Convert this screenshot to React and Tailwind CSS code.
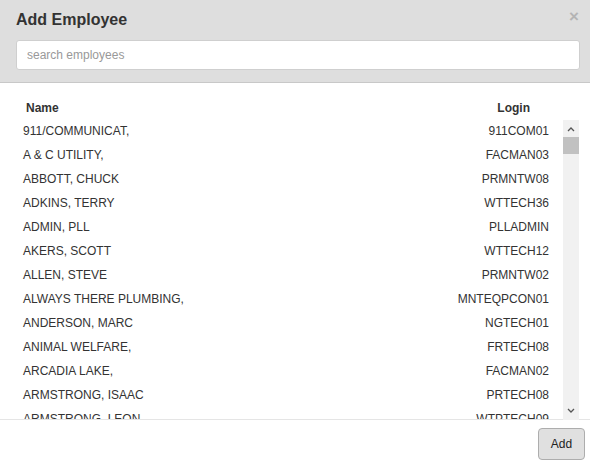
import { useState } from "react"

const employees = [
    ["911/COMMUNICAT,", "911COM01"],
    ["A & C UTILITY,", "FACMAN03"],
    ["ABBOTT, CHUCK", "PRMNTW08"],
    ["ADKINS, TERRY", "WTTECH36"],
    ["ADMIN, PLL", "PLLADMIN"],
    ["AKERS, SCOTT", "WTTECH12"],
    ["ALLEN, STEVE", "PRMNTW02"],
    ["ALWAYS THERE PLUMBING,", "MNTEQPCON01"],
    ["ANDERSON, MARC", "NGTECH01"],
    ["ANIMAL WELFARE,", "FRTECH08"],
    ["ARCADIA LAKE,", "FACMAN02"],
    ["ARMSTRONG, ISAAC", "PRTECH08"],
    ["ARMSTRONG, LEON", "WTPTECH09"],
    ["ARNOLD, GARY", "WTTECH02"],
    ["ASHLEY, DAVID", "PRMNTW05"],
]

export default function App() {
    const [search, setSearch] = useState("")
    const rows = employees.filter(e => e[0].toLowerCase().includes(search.toLowerCase()))

    return (
        <div className="w-[590px] h-[465px] bg-white text-[#333] overflow-hidden" style={{ fontFamily: '"Liberation Sans", Arial, sans-serif' }}>
            {/* HEADER */}
            <div className="relative h-[83px] bg-[#dedede] border-b border-[#c8c8c8] px-4 pt-[10px]">
                <h1 className="text-[16px] leading-5 font-bold text-[#333]">Add Employee</h1>
                <span className="absolute right-[11px] top-[7px] text-[17px] leading-5 font-bold text-[#b4b4b4]">×</span>
                <input
                    value={search}
                    onChange={e => setSearch(e.target.value)}
                    placeholder="search employees"
                    className="mt-[10px] w-[564px] h-[30px] bg-white border border-[#cfcfcf] rounded-[3px] px-[10px] text-[12px] outline-none placeholder:text-[#999]"
                />
            </div>

            {/* TABLE HEAD */}
            <div className="flex items-center h-[37px] pl-[26px] pr-[60px] pt-[12px] text-[12px] font-bold">
                <span className="flex-1">Name</span>
                <span>Login</span>
            </div>

            {/* LIST */}
            <div className="flex h-[300px] border-b border-[#e5e5e5] pr-[11px]">
                <div className="flex-1 overflow-hidden">
                    {rows.map(r => (
                        <div key={r[1]} className="flex h-6 leading-[22px] pl-[23px] pr-[14px] text-[12px]">
                            <span className="flex-1">{r[0]}</span>
                            <span>{r[1]}</span>
                        </div>
                    ))}
                </div>
                <div className="w-[16px] h-[300px] bg-[#f1f1f1] flex flex-col items-center">
                    <svg width="16" height="17" viewBox="0 0 16 17" className="shrink-0">
                        <path d="M5 11 L8 8 L11 11" fill="none" stroke="#555" strokeWidth="1.3" />
                    </svg>
                    <div className="w-[16px] h-[17px] bg-[#c1c1c1]" />
                    <div className="flex-1" />
                    <svg width="16" height="17" viewBox="0 0 16 17" className="shrink-0">
                        <path d="M5 6 L8 9 L11 6" fill="none" stroke="#555" strokeWidth="1.3" />
                    </svg>
                </div>
            </div>

            {/* FOOTER */}
            <div className="flex justify-end pr-[5px] pt-[8px]">
                <button className="w-[47px] h-[32px] bg-[#e0e0e0] border border-[#adadad] rounded-[4px] text-[12px] text-[#222]">
                    Add
                </button>
            </div>
        </div>
    )
}
